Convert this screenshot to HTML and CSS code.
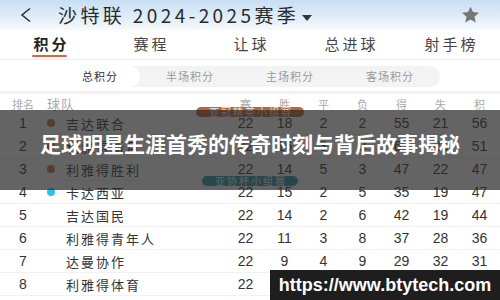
FILE: index.html
```html
<!DOCTYPE html>
<html lang="zh-cn">
<head>
	<meta charset="utf-8"/>
	<title>沙特联 积分榜</title>
	<link rel="stylesheet" href="styles.css">
</head>
<body>
	<div class="page">
		<div class="topbar">
			<svg class="back" width="16" height="16" viewBox="0 0 16 16"><path d="M12 1.5 L4 8 L12 14.5" fill="none" stroke="#333" stroke-width="1.6"/></svg>
			<div class="title">沙特联 2024-2025赛季<span class="caret"></span></div>
			<svg class="star" width="19" height="18" viewBox="0 0 24 23"><path d="M12 0.8 L15.2 7.8 L22.8 8.6 L17.1 13.7 L18.7 21.2 L12 17.4 L5.3 21.2 L6.9 13.7 L1.2 8.6 L8.8 7.8 Z" fill="#777"/></svg>
		</div>

		<div class="tabs">
			<div class="tab active">积分</div>
			<div class="tab">赛程</div>
			<div class="tab">让球</div>
			<div class="tab">总进球</div>
			<div class="tab">射手榜</div>
		</div>

		<div class="subbar">
			<div class="pills">
				<div class="pill active">总积分</div>
				<div class="pill">半场积分</div>
				<div class="pill">主场积分</div>
				<div class="pill">客场积分</div>
			</div>
		</div>

		<div class="table">
			<div class="row head">
				<span>排名</span><span class="team">球队</span>
				<span>赛</span><span>胜</span><span>平</span><span>负</span><span>得</span><span>失</span><span>积</span>
			</div>
			<div class="row">
				<span class="badge acl">亚冠精英小组赛</span>
				<span>1</span><span class="team"><i class="dot brown"></i>吉达联合</span>
				<span>22</span><span>18</span><span>2</span><span>2</span><span>55</span><span>21</span><span>56</span>
			</div>
			<div class="row">
				<span>2</span><span class="team"><i class="dot brown"></i>利雅得新月</span>
				<span>22</span><span>16</span><span>3</span><span>3</span><span>63</span><span>20</span><span>51</span>
			</div>
			<div class="row">
				<span>3</span><span class="team"><i class="dot brown"></i>利雅得胜利</span>
				<span>22</span><span>14</span><span>5</span><span>3</span><span>47</span><span>22</span><span>47</span>
			</div>
			<div class="row">
				<span class="badge afc">亚协杯小组赛</span>
				<span>4</span><span class="team"><i class="dot blue"></i>卡达西亚</span>
				<span>22</span><span>15</span><span>2</span><span>5</span><span>35</span><span>19</span><span>47</span>
			</div>
			<div class="row">
				<span>5</span><span class="team">吉达国民</span>
				<span>22</span><span>14</span><span>2</span><span>6</span><span>42</span><span>19</span><span>44</span>
			</div>
			<div class="row">
				<span>6</span><span class="team">利雅得青年人</span>
				<span>22</span><span>11</span><span>3</span><span>8</span><span>37</span><span>28</span><span>36</span>
			</div>
			<div class="row">
				<span>7</span><span class="team">达曼协作</span>
				<span>22</span><span>9</span><span>4</span><span>9</span><span>29</span><span>32</span><span>31</span>
			</div>
			<div class="row">
				<span>8</span><span class="team">利雅得体育</span>
				<span>22</span><span>8</span><span>5</span><span>9</span><span>30</span><span>33</span><span>29</span>
			</div>
		</div>

		<div class="banner">足球明星生涯首秀的传奇时刻与背后故事揭秘</div>
		<div class="mark">https://www.btytech.com</div>
	</div>
</body>
</html>
```

FILE: styles.css
```css
* {
	-webkit-box-sizing: border-box;
	box-sizing: border-box;
}
body {
	margin: 0;
	font-family: "Liberation Sans", "Noto Sans CJK SC", sans-serif;
	color: #333;
	background: #fff;
}
.page {
	position: relative;
	width: 500px;
	height: 300px;
	overflow: hidden;
}

/* header */
.topbar {
	height: 30px;
	display: flex;
	align-items: center;
	padding: 0 20px 0 18px;
	background: linear-gradient(#c8def3, #e6f0fa 70%, #f7fafd);
}
.back {margin-top: -1px;}
.title {
	flex: 1;
	margin-left: 24px;
	font-size: 19px;
	letter-spacing: 3.4px;
	color: #2a2a2a;
	font-family: "Noto Sans CJK SC", sans-serif;
	line-height: 30px;
}
.caret {
	display: inline-block;
	width: 0;
	height: 0;
	margin-left: 3px;
	vertical-align: middle;
	border-left: 5px solid transparent;
	border-right: 5px solid transparent;
	border-top: 6px solid #333;
}

/* tabs */
.tabs {
	display: grid;
	grid-template-columns: repeat(5, 100px);
	height: 30px;
	border-bottom: 1px solid #eee;
	font-family: "Noto Sans CJK SC", sans-serif;
}
.tab {
	position: relative;
	text-align: center;
	font-size: 15px;
	letter-spacing: 3px;
	text-indent: 3px;
	line-height: 28px;
	color: #444;
}
.tab.active {
	color: #222;
	font-weight: bold;
}
.tab.active::after {
	content: "";
	position: absolute;
	left: 32px;
	right: 33px;
	bottom: 2px;
	height: 2px;
	border-radius: 1px;
	background: #e8603c;
}

/* sub tabs */
.subbar {
	height: 34px;
	padding-top: 6px;
	border-bottom: 3px solid #f2f2f2;
}
.pills {
	display: grid;
	grid-template-columns: 80px 100px 100px 100px;
	width: 380px;
	height: 21px;
	margin-left: 60px;
	border-radius: 11px;
	background: #f3f3f3;
	font-family: "Noto Sans CJK SC", sans-serif;
}
.pill {
	text-align: center;
	font-size: 11px;
	letter-spacing: 1px;
	line-height: 21px;
	color: #9a9a9a;
}
.pill.active {
	background: #fff;
	border-radius: 11px;
	color: #333;
}

/* table */
.row {
	position: relative;
	display: grid;
	grid-template-columns: 38px 1fr repeat(7, 39px);
	align-items: center;
	height: 23px;
	padding: 0 1px 0 4px;
	border-bottom: 1px solid #f1f1f1;
	font-size: 14px;
	color: #333;
	text-align: center;
}
.row.head {
	height: 18px;
	font-size: 11px;
	color: #aaa;
	font-family: "Noto Sans CJK SC", sans-serif;
	border-bottom: none;
}
.row .team {
	display: flex;
	align-items: center;
	padding-left: 24px;
	text-align: left;
	font-size: 13px;
	letter-spacing: 2px;
	font-family: "Noto Sans CJK SC", sans-serif;
}
.row.head .team {padding-left: 5px; letter-spacing: 1px;}
.dot {
	width: 8px;
	height: 8px;
	margin: 0 11px 0 -19px;
	border-radius: 50%;
}
.dot.brown {background: #b9724f;}
.dot.blue {background: #2cc0ec;}

.badge {
	position: absolute;
	left: 50%;
	top: -5px;
	transform: translateX(-50%);
	height: 10px;
	padding: 0 11px 0 13px;
	border-radius: 5px;
	font-size: 10px;
	line-height: 10px;
	letter-spacing: 2px;
	color: #f2e6df;
	font-family: "Noto Sans CJK SC", sans-serif;
	white-space: nowrap;
}
.badge.acl {background: #b8653b;}
.badge.afc {background: #2a98aa; color: #e6f5f7;}

/* overlays */
.banner {
	position: absolute;
	left: 0;
	top: 110px;
	width: 500px;
	height: 80px;
	background: rgba(40, 40, 40, 0.72);
	color: #fff;
	font-family: "Noto Sans CJK SC", sans-serif;
	font-weight: bold;
	font-size: 21px;
	line-height: 66px;
	text-align: center;
}
.mark {
	position: absolute;
	left: 270px;
	top: 270px;
	width: 230px;
	height: 30px;
	background: #1e1e1e;
	color: #fff;
	font-family: "Liberation Sans", sans-serif;
	font-weight: bold;
	font-size: 18px;
	line-height: 30px;
	text-align: center;
}
```
